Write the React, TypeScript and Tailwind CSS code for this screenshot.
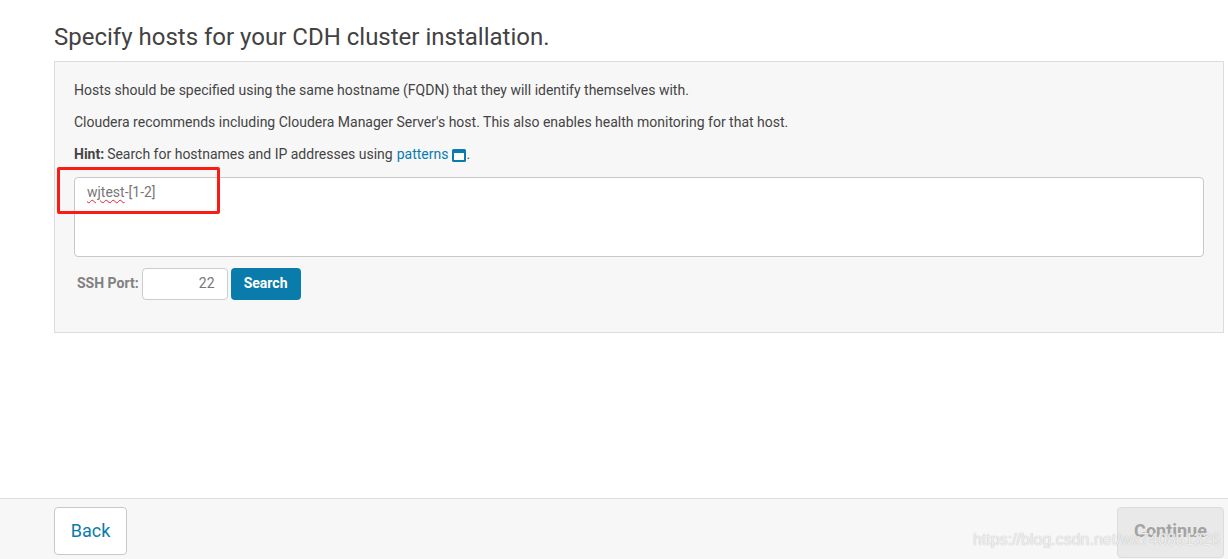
const App = () => {
  return (
    <div className="relative h-[559px] w-[1228px] overflow-hidden bg-white font-['Roboto',sans-serif] text-[#444444]">
      <div className="h-[498px] pl-[54px] pr-[4px] pt-[22px]">
        <h1 className="h-[39px] text-[24px] leading-[30px] text-[#424242]">
          Specify hosts for your CDH cluster installation.
        </h1>
        <div className="h-[272px] border border-[#dddddd] bg-[#f7f7f7] px-[19px] pt-[18px]">
          <p className="text-[14px] leading-[20px]">
            Hosts should be specified using the same hostname (FQDN) that they will identify themselves with.
          </p>
          <p className="mt-[12px] text-[14px] leading-[20px]">
            Cloudera recommends including Cloudera Manager Server's host. This also enables health monitoring for that host.
          </p>
          <p className="mt-[12px] flex items-center text-[14px] leading-[20px]">
            <b className="font-bold">Hint:</b>
            <span className="ml-[3px]">Search for hostnames and IP addresses using</span>
            <span className="ml-[4px] text-[#0a7cab]">patterns</span>
            <svg className="ml-[4px] mt-[2px]" width="14" height="13" viewBox="0 0 14 13">
              <rect x="0" y="0" width="14" height="13" rx="1.5" fill="#0a7cab" />
              <rect x="2" y="4" width="10" height="7" fill="#ffffff" />
            </svg>
            <span>.</span>
          </p>
          <div className="mt-[13px] h-[80px] rounded-[4px] border border-[#c8c8c8] bg-white px-[12px] py-[5px] text-[14px] leading-[18px] text-[#777777]">
            <span className="underline decoration-[#e0242c] decoration-wavy decoration-1 underline-offset-2">wjtest</span>
            -[1-2]
          </div>
          <div className="mt-[11px] flex items-center pl-[3px]">
            <span className="mb-[2px] text-[14px] font-bold text-[#808080]">SSH Port:</span>
            <div className="ml-[3px] h-[32px] w-[86px] rounded-[4px] border border-[#cccccc] bg-white pr-[12px] text-right text-[14px] leading-[28px] text-[#777777]">
              22
            </div>
            <button className="ml-[3px] h-[32px] w-[70px] rounded-[4px] bg-[#0a7cab] pb-[2px] text-[14px] font-bold text-white">
              Search
            </button>
          </div>
        </div>
      </div>

      <div className="flex h-[61px] items-start justify-between border-t border-[#dddddd] bg-[#f7f7f7] pl-[54px] pr-[4px] pt-[8px]">
        <button className="h-[48px] w-[73px] rounded-[4px] border border-[#c8c8c8] bg-white pb-[2px] text-[18px] text-[#0a7cab]">
          Back
        </button>
        <button className="h-[51px] w-[107px] rounded-[4px] border border-[#dcdcdc] bg-[#e9e9e9] pb-[4px] text-[18px] font-bold text-[#a3a3a3]">
          Continue
        </button>
      </div>

      {/* annotation drawn over the screenshot */}
      <div className="absolute left-[57px] top-[167px] h-[47px] w-[163px] rounded-[2px] border-[3px] border-[#fb1b14]" />

      {/* csdn watermark */}
      <span className="absolute left-[973px] top-[529px] whitespace-nowrap font-['Liberation_Sans',sans-serif] text-[16px] leading-[22px] text-[#ffffff]/80 [text-shadow:0_0_1px_#a0a0a0]">
        https://blog.csdn.net/wx740851326
      </span>
    </div>
  );
};

export default App;
